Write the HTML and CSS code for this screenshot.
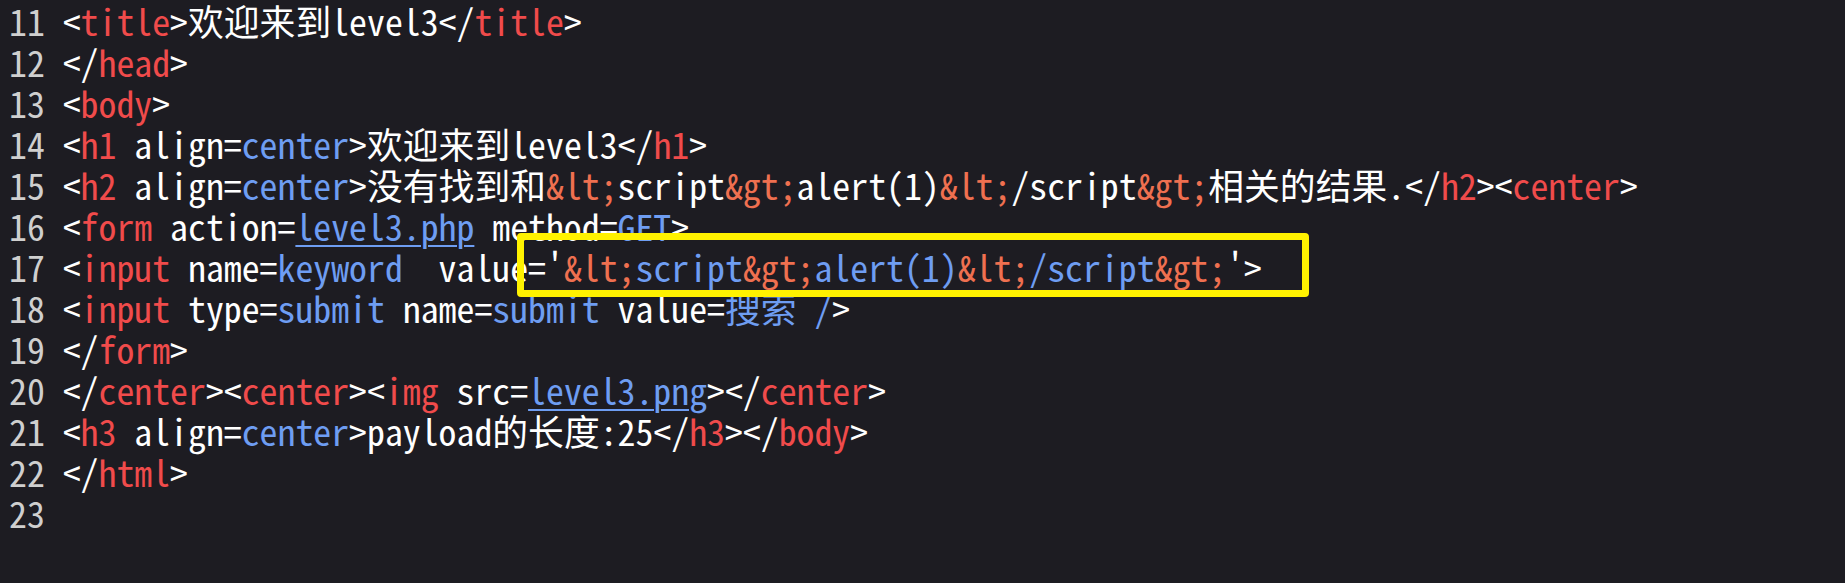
FILE: index.html
```html
<!DOCTYPE html>
<html lang="zh">
<head>
<meta charset="utf-8">
<title>level3 source</title>
<link rel="stylesheet" href="styles.css">
</head>
<body>
<div class="editor">
  <div class="line"><span class="ln">11 </span>&lt;<span class="tag">title</span>&gt;欢迎来到level3&lt;/<span class="tag">title</span>&gt;</div>
  <div class="line"><span class="ln">12 </span>&lt;/<span class="tag">head</span>&gt;</div>
  <div class="line"><span class="ln">13 </span>&lt;<span class="tag">body</span>&gt;</div>
  <div class="line"><span class="ln">14 </span>&lt;<span class="tag">h1</span> align=<span class="val">center</span>&gt;欢迎来到level3&lt;/<span class="tag">h1</span>&gt;</div>
  <div class="line"><span class="ln">15 </span>&lt;<span class="tag">h2</span> align=<span class="val">center</span>&gt;没有找到和<span class="ent">&amp;lt;</span>script<span class="ent">&amp;gt;</span>alert(1)<span class="ent">&amp;lt;</span>/script<span class="ent">&amp;gt;</span>相关的结果.&lt;/<span class="tag">h2</span>&gt;&lt;<span class="tag">center</span>&gt;</div>
  <div class="line"><span class="ln">16 </span>&lt;<span class="tag">form</span> action=<span class="val link">level3.php</span> method=<span class="val">GET</span>&gt;</div>
  <div class="line"><span class="ln">17 </span>&lt;<span class="tag">input</span> name=<span class="val">keyword</span>  value='<span class="ent">&amp;lt;</span><span class="val">script</span><span class="ent">&amp;gt;</span><span class="val">alert(1)</span><span class="ent">&amp;lt;</span><span class="val">/script</span><span class="ent">&amp;gt;</span>'&gt;</div>
  <div class="line"><span class="ln">18 </span>&lt;<span class="tag">input</span> type=<span class="val">submit</span> name=<span class="val">submit</span> value=<span class="val">搜索 /</span>&gt;</div>
  <div class="line"><span class="ln">19 </span>&lt;/<span class="tag">form</span>&gt;</div>
  <div class="line"><span class="ln">20 </span>&lt;/<span class="tag">center</span>&gt;&lt;<span class="tag">center</span>&gt;&lt;<span class="tag">img</span> src=<span class="val link">level3.png</span>&gt;&lt;/<span class="tag">center</span>&gt;</div>
  <div class="line"><span class="ln">21 </span>&lt;<span class="tag">h3</span> align=<span class="val">center</span>&gt;payload的长度:25&lt;/<span class="tag">h3</span>&gt;&lt;/<span class="tag">body</span>&gt;</div>
  <div class="line"><span class="ln">22 </span>&lt;/<span class="tag">html</span>&gt;</div>
  <div class="line"><span class="ln">23 </span></div>
  <div class="highlight"></div>
</div>
</body>
</html>
```

FILE: styles.css
```css
html, body {
  margin: 0;
  padding: 0;
  background: #1d1c22;
}
body {
  width: 1845px;
  height: 583px;
  overflow: hidden;
}
.editor {
  position: relative;
  height: 583px;
  padding-left: 9px;
  font-family: "Noto Sans Mono CJK SC", "Liberation Mono", "Noto Sans CJK SC", monospace;
  font-size: 35.8px;
  color: #ffffff;
}
.line {
  height: 41px;
  line-height: 41px;
  white-space: pre;
}
.ln {
  color: #cfcfcf;
}
.tag {
  color: #f04b4b;
}
.val {
  color: #6e9df2;
}
.ent {
  color: #ef7050;
}
.link {
  text-decoration: underline;
  text-decoration-thickness: 2px;
  text-underline-offset: 4px;
}
.highlight {
  position: absolute;
  left: 517px;
  top: 233px;
  width: 792px;
  height: 64px;
  box-sizing: border-box;
  border: 7px solid #fff200;
  border-radius: 4px;
}
```
